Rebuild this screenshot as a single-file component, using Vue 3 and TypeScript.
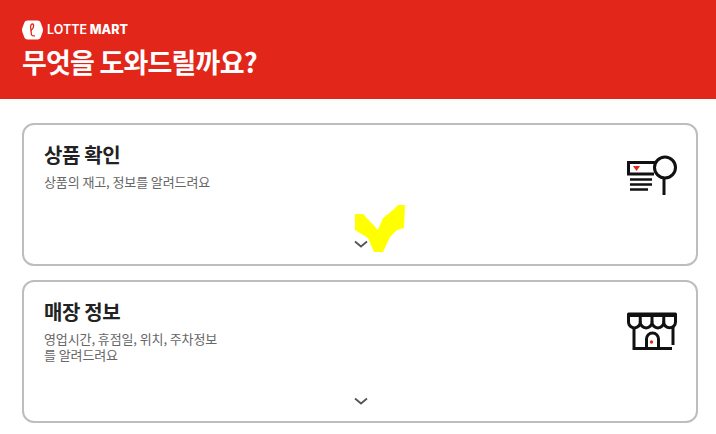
<template>
  <div class="page">
    <header class="top">
      <div class="brand">
        <svg class="brand_logo" width="21" height="20" viewBox="0 0 21 20">
          <path d="M5.500 .5h10c1.500 0 2.500 .8 3.200 2.200l1.600 4.300c.9 2 .9 4 0 6l-1.600 4.300c-.7 1.400-1.700 2.200-3.200 2.200h-10c-1.500 0-2.500-.8-3.200-2.200L.7 13c-.9-2-.9-4 0-6l1.600-4.300C3 1.300 4 .5 5.500 .5z" fill="#fff" />
          <path d="M10.500 4c-1.700 0-2.300 2-1.700 5 .4 2 .5 3.500 .5 4.500 0 2 1.200 2.800 3.200 2.300M10.500 4c1.500 0 1.500 2.500 .2 4.500-.8 1.200-1.500 2-1.900 2.300" fill="none" stroke="#e3261a" stroke-width="1.300" stroke-linecap="round" />
        </svg>
        <span class="brand_name"><span class="brand_light">LOTTE</span> MART</span>
      </div>
      <h1 class="top_title">무엇을 도와드릴까요?</h1>
    </header>

    <main class="list">
      <section class="card">
        <div class="card_row">
          <div>
            <h2 class="card_title">상품 확인</h2>
            <p class="card_desc">상품의 재고, 정보를 알려드려요</p>
          </div>
          <svg class="card_icon" width="52" height="42" viewBox="0 0 52 42">
            <path d="M28 7.500H1.500v11.500H27" fill="none" stroke="#111" stroke-width="3" />
            <path d="M6 11h7l-3.500 5z" fill="#e3261a" />
            <path d="M3 24.500h22M3 29.500h22M3 34.500h18" stroke="#111" stroke-width="2.500" />
            <circle cx="38" cy="12.500" r="10.500" fill="#fff" stroke="#111" stroke-width="3" />
            <path d="M37 23v17" stroke="#111" stroke-width="3" />
          </svg>
        </div>
        <svg class="card_arrow" width="14" height="8" viewBox="0 0 14 8">
          <path d="M1 1.500l6 5 6-5" fill="none" stroke="#555" stroke-width="1.800" />
        </svg>
      </section>

      <section class="card">
        <div class="card_row">
          <div>
            <h2 class="card_title">매장 정보</h2>
            <p class="card_desc">영업시간, 휴점일, 위치, 주차정보<br />를 알려드려요</p>
          </div>
          <svg class="card_icon" width="52" height="42" viewBox="0 0 52 42">
            <path d="M1.500 2H48.500V10a5.875 5.875 0 0 1-11.750 0a5.875 5.875 0 0 1-11.750 0a5.875 5.875 0 0 1-11.750 0a5.875 5.875 0 0 1-11.750 0z" fill="none" stroke="#111" stroke-width="3" stroke-linejoin="round" />
            <path d="M1 3.500h48" stroke="#111" stroke-width="3" />
            <path d="M13.250 2v8M25 2v8M36.750 2v8" stroke="#111" stroke-width="3" />
            <path d="M7 15v21.500h38M46 15v18" fill="none" stroke="#111" stroke-width="3" />
            <path d="M19.500 37V27a6 6 0 0 1 12 0v10" fill="none" stroke="#111" stroke-width="3" />
            <circle cx="24.500" cy="30" r="1.700" fill="#e3261a" />
          </svg>
        </div>
        <svg class="card_arrow" width="14" height="8" viewBox="0 0 14 8">
          <path d="M1 1.500l6 5 6-5" fill="none" stroke="#555" stroke-width="1.800" />
        </svg>
      </section>
    </main>

    <svg class="mark" width="52" height="48" viewBox="0 0 52 48">
      <path d="M1 9h8l15 16 5-12 10-8 5-5h7l-1 23-7 2-7 7-7 15h-9l-6-14L1 25z" fill="#ff0" />
    </svg>
  </div>
</template>

<script setup lang="ts">
</script>

<style>
html,
body {
  margin: 0;
  background: #fff;
}
</style>

<style scoped>
.page {
  position: relative;
  width: 716px;
  height: 434px;
  overflow: hidden;
  font-family: "Noto Sans CJK KR", "Liberation Sans", sans-serif;
}

.top {
  height: 99px;
  box-sizing: border-box;
  padding: 20px 22px 0;
  background: #e3261a;
  color: #fff;
}

.brand {
  display: flex;
  align-items: center;
  gap: 4px;
  height: 20px;
}

.brand_name {
  font-family: Inter, "Liberation Sans", sans-serif;
  font-size: 12.500px;
  font-weight: 800;
  line-height: 20px;
}

.brand_light {
  font-weight: 600;
}

.top_title {
  margin: 6px 0 0;
  font-size: 27px;
  font-weight: 700;
  line-height: 32px;
  letter-spacing: -0.8px;
}

.list {
  display: flex;
  flex-direction: column;
  gap: 14px;
  padding: 24px 18px 0 22px;
}

.card {
  display: flex;
  flex-direction: column;
  height: 143px;
  box-sizing: border-box;
  padding: 16px 17px 0 20px;
  border: 2px solid #bdbdbd;
  border-radius: 12px;
}

.card_row {
  display: flex;
  justify-content: space-between;
  align-items: flex-start;
  height: 98px;
}

.card_title {
  margin: 0;
  color: #222;
  font-size: 20px;
  font-weight: 700;
  line-height: 28px;
  letter-spacing: -0.4px;
}

.card_desc {
  margin: 5px 0 0;
  color: #666;
  font-size: 13px;
  line-height: 16px;
  letter-spacing: -0.1px;
}

.card_icon {
  margin: 14px 0 0;
}

.card_arrow {
  align-self: center;
  margin: 1px 2px 0 0;
}

.mark {
  position: absolute;
  left: 354px;
  top: 205px;
}
</style>
